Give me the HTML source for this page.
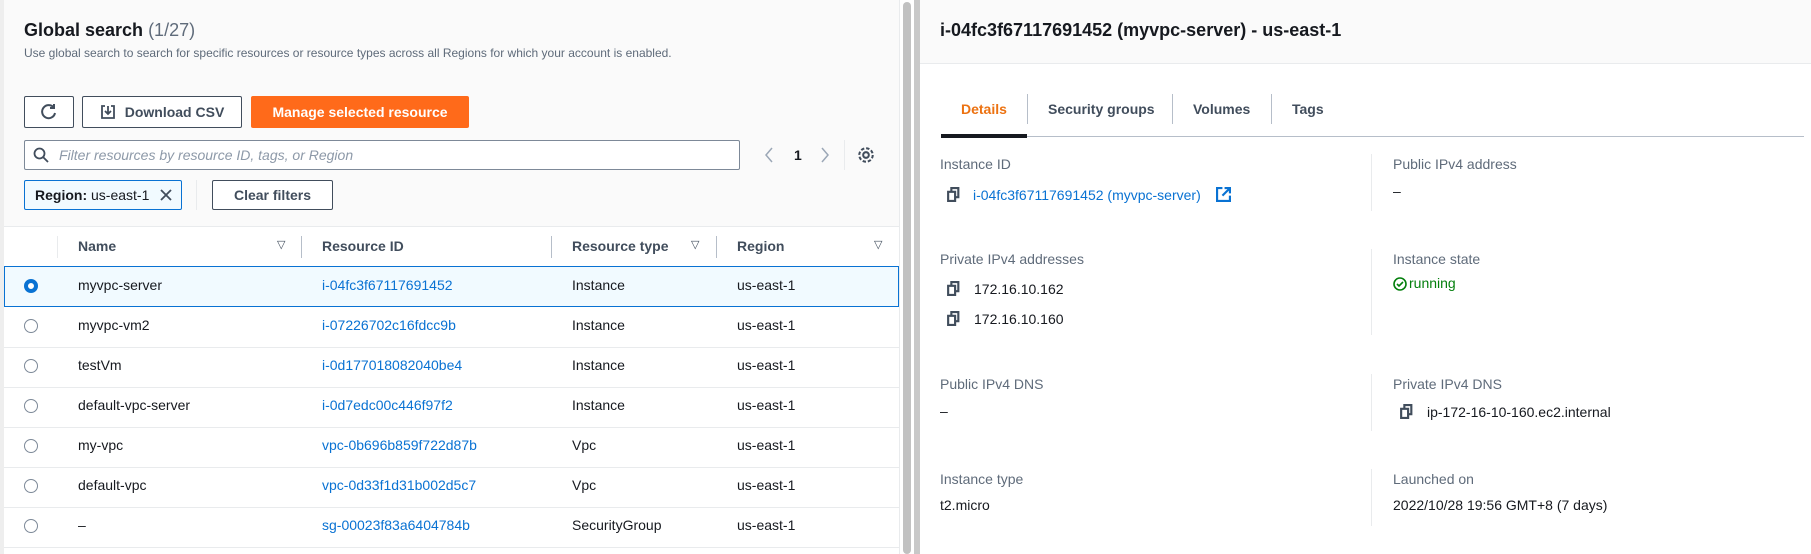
<!DOCTYPE html>
<html><head><meta charset="utf-8"><style>
*{box-sizing:border-box;margin:0;padding:0}
body{width:1811px;height:554px;overflow:hidden;background:#fff;font-family:"Liberation Sans",sans-serif;color:#16191f;position:relative;font-size:14px}
.a{position:absolute;white-space:nowrap}
.lnk{color:#0972d3}
.btn{position:absolute;border:1px solid #414d5c;border-radius:2px;background:#fff;font-weight:bold;font-size:14px;color:#414d5c;display:flex;align-items:center;justify-content:center}
.lbl{color:#5f6b7a;font-size:14px}
.radio{position:absolute;width:14px;height:14px;border:1.5px solid #7d8998;border-radius:50%;left:24px}
.vd{position:absolute;width:1px;background:#e9ebed}
</style></head><body>
<div class="a" style="left:0;top:0;width:4px;height:554px;background:#eee"></div>
<div class="a" style="left:4px;top:0;width:895px;height:226px;background:#fafafa"></div>
<div class="a" style="left:899px;top:0;width:1px;height:554px;background:#e9ebed"></div>
<div class="a" style="left:903px;top:2px;width:8px;height:552px;background:#c1c1c1;border-radius:4px"></div>
<div class="a" style="left:914px;top:0;width:6px;height:554px;background:#c8c8c8"></div>

<div class="a" style="left:24px;top:20px;font-size:18px;font-weight:bold">Global search <span style="font-weight:normal;color:#5f6b7a">(1/27)</span></div>
<div class="a" style="left:24px;top:46px;font-size:12px;color:#5f6b7a">Use global search to search for specific resources or resource types across all Regions for which your account is enabled.</div>

<div class="btn" style="left:24px;top:96px;width:50px;height:32px"><svg width="18" height="18" viewBox="0 0 18 18" fill="none" stroke="#414d5c" stroke-width="2"><path d="M14 5A6.5 6.5 0 1 0 15 10"/><path d="M14 1v4h-4"/></svg></div>
<div class="btn" style="left:82px;top:96px;width:160px;height:32px"><svg width="16" height="16" viewBox="0 0 16 16" fill="none" stroke="#414d5c" stroke-width="1.8" style="margin-right:9px"><path d="M5 2H2v12h12V2h-3M8 2v8M5 7l3 3 3-3"/></svg>Download CSV</div>
<div class="btn" style="left:251px;top:96px;width:218px;height:32px;background:#ff6a1a;border-color:#ff6a1a;color:#fff">Manage selected resource</div>

<div class="a" style="left:24px;top:140px;width:716px;height:30px;border:1px solid #7d8998;border-radius:2px;background:#fff"></div>
<svg class="a" style="left:33px;top:147px" width="16" height="16" viewBox="0 0 16 16" fill="none" stroke="#414d5c" stroke-width="1.8"><circle cx="6.5" cy="6.5" r="5"/><path d="M10 10l5 5"/></svg>
<div class="a" style="left:59px;top:147px;font-style:italic;color:#8d99a8;font-size:14px">Filter resources by resource ID, tags, or Region</div>
<svg class="a" style="left:764px;top:146px" width="10" height="18" viewBox="0 0 10 18" fill="none" stroke="#9ba7b6" stroke-width="1.5"><path d="M8 2L2 9l6 7"/></svg>
<div class="a" style="left:794px;top:147px;font-weight:bold">1</div>
<svg class="a" style="left:820px;top:146px" width="10" height="18" viewBox="0 0 10 18" fill="none" stroke="#9ba7b6" stroke-width="1.5"><path d="M2 2l6 7-6 7"/></svg>
<div class="vd" style="left:844px;top:140px;height:30px"></div>
<svg class="a" style="left:857px;top:146px" width="18" height="18" viewBox="0 0 16 16" fill="none" stroke="#414d5c" stroke-width="1.8"><circle cx="8" cy="8" r="2.5"/><circle cx="8" cy="8" r="6" stroke-dasharray="3 1.7"/></svg>

<div class="a" style="left:24px;top:180px;width:158px;height:30px;border:1px solid #0972d3;background:#f1faff;border-radius:2px"></div>
<div class="a" style="left:35px;top:187px"><b>Region:</b> us-east-1</div>
<svg class="a" style="left:159px;top:188px" width="14" height="14" viewBox="0 0 14 14" stroke="#414d5c" stroke-width="1.8"><path d="M2 2l10 10M12 2L2 12"/></svg>
<div class="vd" style="left:196px;top:180px;height:30px"></div>
<div class="btn" style="left:212px;top:180px;width:121px;height:30px">Clear filters</div>

<div class="a" style="left:4px;top:226px;width:895px;height:1px;background:#e9ebed"></div>
<div class="vd" style="left:57px;top:236px;height:22px"></div>
<div class="vd" style="left:301px;top:236px;height:22px;background:#b6bec9"></div>
<div class="vd" style="left:551px;top:236px;height:22px;background:#b6bec9"></div>
<div class="vd" style="left:716px;top:236px;height:22px;background:#b6bec9"></div>
<div class="a" style="left:78px;top:238px;font-weight:bold;color:#414d5c">Name</div>
<div class="a" style="left:322px;top:238px;font-weight:bold;color:#414d5c">Resource ID</div>
<div class="a" style="left:572px;top:238px;font-weight:bold;color:#414d5c">Resource type</div>
<div class="a" style="left:737px;top:238px;font-weight:bold;color:#414d5c">Region</div>
<div class="a" style="left:277px;top:238px;color:#414d5c;font-size:11px">&#9661;</div>
<div class="a" style="left:691px;top:238px;color:#414d5c;font-size:11px">&#9661;</div>
<div class="a" style="left:874px;top:238px;color:#414d5c;font-size:11px">&#9661;</div>

<div class="a" style="left:4px;top:266px;width:895px;height:41px;border:1px solid #0972d3;background:#f1faff"></div>
<div class="a" style="left:24px;top:279px;width:14px;height:14px;border:4px solid #0972d3;border-radius:50%;background:#fff"></div>

<div class="a" style="left:78px;top:277px">myvpc-server</div><div class="a lnk" style="left:322px;top:277px">i-04fc3f67117691452</div><div class="a" style="left:572px;top:277px">Instance</div><div class="a" style="left:737px;top:277px">us-east-1</div>

<div class="a" style="left:4px;top:347px;width:895px;height:1px;background:#e9ebed"></div>
<div class="a" style="left:4px;top:387px;width:895px;height:1px;background:#e9ebed"></div>
<div class="a" style="left:4px;top:427px;width:895px;height:1px;background:#e9ebed"></div>
<div class="a" style="left:4px;top:467px;width:895px;height:1px;background:#e9ebed"></div>
<div class="a" style="left:4px;top:507px;width:895px;height:1px;background:#e9ebed"></div>
<div class="a" style="left:4px;top:547px;width:895px;height:1px;background:#e9ebed"></div>

<div class="radio" style="top:319px"></div><div class="a" style="left:78px;top:317px">myvpc-vm2</div><div class="a lnk" style="left:322px;top:317px">i-07226702c16fdcc9b</div><div class="a" style="left:572px;top:317px">Instance</div><div class="a" style="left:737px;top:317px">us-east-1</div>
<div class="radio" style="top:359px"></div><div class="a" style="left:78px;top:357px">testVm</div><div class="a lnk" style="left:322px;top:357px">i-0d177018082040be4</div><div class="a" style="left:572px;top:357px">Instance</div><div class="a" style="left:737px;top:357px">us-east-1</div>
<div class="radio" style="top:399px"></div><div class="a" style="left:78px;top:397px">default-vpc-server</div><div class="a lnk" style="left:322px;top:397px">i-0d7edc00c446f97f2</div><div class="a" style="left:572px;top:397px">Instance</div><div class="a" style="left:737px;top:397px">us-east-1</div>
<div class="radio" style="top:439px"></div><div class="a" style="left:78px;top:437px">my-vpc</div><div class="a lnk" style="left:322px;top:437px">vpc-0b696b859f722d87b</div><div class="a" style="left:572px;top:437px">Vpc</div><div class="a" style="left:737px;top:437px">us-east-1</div>
<div class="radio" style="top:479px"></div><div class="a" style="left:78px;top:477px">default-vpc</div><div class="a lnk" style="left:322px;top:477px">vpc-0d33f1d31b002d5c7</div><div class="a" style="left:572px;top:477px">Vpc</div><div class="a" style="left:737px;top:477px">us-east-1</div>
<div class="radio" style="top:519px"></div><div class="a" style="left:78px;top:517px">–</div><div class="a lnk" style="left:322px;top:517px">sg-00023f83a6404784b</div><div class="a" style="left:572px;top:517px">SecurityGroup</div><div class="a" style="left:737px;top:517px">us-east-1</div>

<!-- right panel -->
<div class="a" style="left:920px;top:0;width:891px;height:64px;background:#fafafa;border-bottom:1px solid #e9ebed"></div>
<div class="a" style="left:940px;top:20px;font-size:18px;font-weight:bold">i-04fc3f67117691452 (myvpc-server) - us-east-1</div>

<div class="a" style="left:961px;top:101px;font-weight:bold;color:#ec7211">Details</div>
<div class="vd" style="left:1027px;top:94px;height:30px;background:#b6bec9"></div>
<div class="a" style="left:1048px;top:101px;font-weight:bold;color:#414d5c">Security groups</div>
<div class="vd" style="left:1172px;top:94px;height:30px;background:#b6bec9"></div>
<div class="a" style="left:1193px;top:101px;font-weight:bold;color:#414d5c">Volumes</div>
<div class="vd" style="left:1271px;top:94px;height:30px;background:#b6bec9"></div>
<div class="a" style="left:1292px;top:101px;font-weight:bold;color:#414d5c">Tags</div>
<div class="a" style="left:941px;top:136px;width:863px;height:1px;background:#b6bec9"></div>
<div class="a" style="left:941px;top:134px;width:86px;height:4px;background:#16191f"></div>

<div class="vd" style="left:1371px;top:154px;height:57px"></div>
<div class="vd" style="left:1371px;top:249px;height:86px"></div>
<div class="vd" style="left:1371px;top:374px;height:57px"></div>
<div class="vd" style="left:1371px;top:469px;height:57px"></div>

<svg width="0" height="0" style="position:absolute"><defs><symbol id="cp" viewBox="0 0 14 14"><path d="M2 4.5h6.5v8.5H2zM5 4.5V1h6.5v8.5H8.5" fill="none" stroke="#414d5c" stroke-width="2"/></symbol></defs></svg>

<div class="a lbl" style="left:940px;top:156px">Instance ID</div>
<svg class="a" style="left:946px;top:187px" width="15" height="15"><use href="#cp"/></svg>
<div class="a lnk" style="left:973px;top:187px">i-04fc3f67117691452 (myvpc-server)</div>
<svg class="a" style="left:1216px;top:187px" width="15" height="15" viewBox="0 0 14 14" fill="none" stroke="#0972d3" stroke-width="2"><path d="M6 1H1v12h12V8M8 1h5v5M13 1L6 8"/></svg>
<div class="a lbl" style="left:1393px;top:156px">Public IPv4 address</div>
<div class="a" style="left:1393px;top:183px">–</div>

<div class="a lbl" style="left:940px;top:251px">Private IPv4 addresses</div>
<svg class="a" style="left:946px;top:281px" width="15" height="15"><use href="#cp"/></svg>
<div class="a" style="left:974px;top:281px">172.16.10.162</div>
<svg class="a" style="left:946px;top:311px" width="15" height="15"><use href="#cp"/></svg>
<div class="a" style="left:974px;top:311px">172.16.10.160</div>
<div class="a lbl" style="left:1393px;top:251px">Instance state</div>
<svg class="a" style="left:1393px;top:277px" width="14" height="14" viewBox="0 0 14 14" fill="none" stroke="#037f0c" stroke-width="1.6"><circle cx="7" cy="7" r="6"/><path d="M4 7l2 2 4-4"/></svg>
<div class="a" style="left:1409px;top:275px;color:#037f0c">running</div>

<div class="a lbl" style="left:940px;top:376px">Public IPv4 DNS</div>
<div class="a" style="left:940px;top:403px">–</div>
<div class="a lbl" style="left:1393px;top:376px">Private IPv4 DNS</div>
<svg class="a" style="left:1399px;top:404px" width="15" height="15"><use href="#cp"/></svg>
<div class="a" style="left:1427px;top:404px">ip-172-16-10-160.ec2.internal</div>

<div class="a lbl" style="left:940px;top:471px">Instance type</div>
<div class="a" style="left:940px;top:497px">t2.micro</div>
<div class="a lbl" style="left:1393px;top:471px">Launched on</div>
<div class="a" style="left:1393px;top:497px">2022/10/28 19:56 GMT+8 (7 days)</div>
</body></html>
